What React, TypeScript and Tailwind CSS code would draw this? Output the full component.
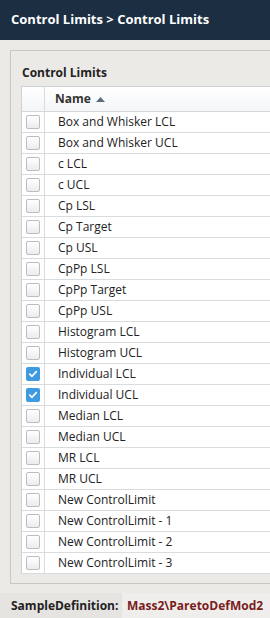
import React from "react";

const rows: { name: string; checked?: boolean }[] = [
  { name: "Box and Whisker LCL" },
  { name: "Box and Whisker UCL" },
  { name: "c LCL" },
  { name: "c UCL" },
  { name: "Cp LSL" },
  { name: "Cp Target" },
  { name: "Cp USL" },
  { name: "CpPp LSL" },
  { name: "CpPp Target" },
  { name: "CpPp USL" },
  { name: "Histogram LCL" },
  { name: "Histogram UCL" },
  { name: "Individual LCL", checked: true },
  { name: "Individual UCL", checked: true },
  { name: "Median LCL" },
  { name: "Median UCL" },
  { name: "MR LCL" },
  { name: "MR UCL" },
  { name: "New ControlLimit" },
  { name: "New ControlLimit - 1" },
  { name: "New ControlLimit - 2" },
  { name: "New ControlLimit - 3" },
];

function Checkbox({ checked }: { checked?: boolean }) {
  if (checked) {
    return (
      <div className="w-[14px] h-[14px] rounded-[2px] bg-[#3f9be0] flex items-center justify-center">
        <svg width="10" height="10" viewBox="0 0 10 10">
          <path d="M1.8 5.2 L4 7.3 L8.3 2.6" fill="none" stroke="white" strokeWidth="1.7" strokeLinecap="round" strokeLinejoin="round" />
        </svg>
      </div>
    );
  }
  return (
    <div className="w-[14px] h-[14px] rounded-[2px] border border-[#bdbdbd] bg-gradient-to-b from-white to-[#ececec]" />
  );
}

export default function App() {
  return (
    <div
      className="w-[270px] h-[618px] bg-[#eceae6] flex flex-col overflow-hidden text-[#222]"
      style={{ fontFamily: '"Open Sans", "Noto Sans", sans-serif' }}
    >
      <div className="h-[40px] shrink-0 bg-[#1b2e42] px-[11px] flex items-center text-white font-bold text-[13px] whitespace-nowrap">
        Control Limits &gt; Control Limits
      </div>
      <div className="pt-[10px] pl-[10px] shrink-0">
        <div className="h-[534px] border-l border-t border-b border-[#c9c7c3] pl-[10px] flex flex-col overflow-hidden">
          <div className="pt-[14px] pb-[5px] leading-[16px] text-[12px] font-bold text-[#222] pl-[1px]">Control Limits</div>
          <div className="border-l border-t border-[#cfd3d6] bg-white">
            <div className="h-[25px] flex border-b border-[#d4d7da] bg-gradient-to-b from-white to-[#f3f5f7]">
              <div className="w-[23px] shrink-0 border-r border-[#d9dcde]" />
              <div className="flex items-center pl-[10px] text-[12px] font-bold text-[#333] gap-[5px]">
                <span>Name</span>
                <svg width="9" height="5" viewBox="0 0 9 5">
                  <path d="M0 5 L4.5 0 L9 5 Z" fill="#5f6d7a" />
                </svg>
              </div>
            </div>
            {rows.map((r) => (
              <div key={r.name} className="h-[21px] flex border-b border-[#d9dcde]">
                <div className="w-[23px] shrink-0 border-r border-[#d9dcde] flex items-center justify-center pr-[1px]">
                  <Checkbox checked={r.checked} />
                </div>
                <div className="flex items-center pl-[13px] text-[12px] text-[#222] whitespace-nowrap">{r.name}</div>
              </div>
            ))}
          </div>
        </div>
      </div>
      <div className="mt-[9px] flex-1 flex items-center bg-[#e6e4e1] text-[12px] font-bold">
        <div className="pl-[11px] w-[122px] shrink-0 text-[#222]">SampleDefinition:</div>
        <div className="flex-1 self-stretch flex items-center pl-[5px] bg-[#efeeec] text-[#7a1c1c]">Mass2\ParetoDefMod2</div>
      </div>
    </div>
  );
}
